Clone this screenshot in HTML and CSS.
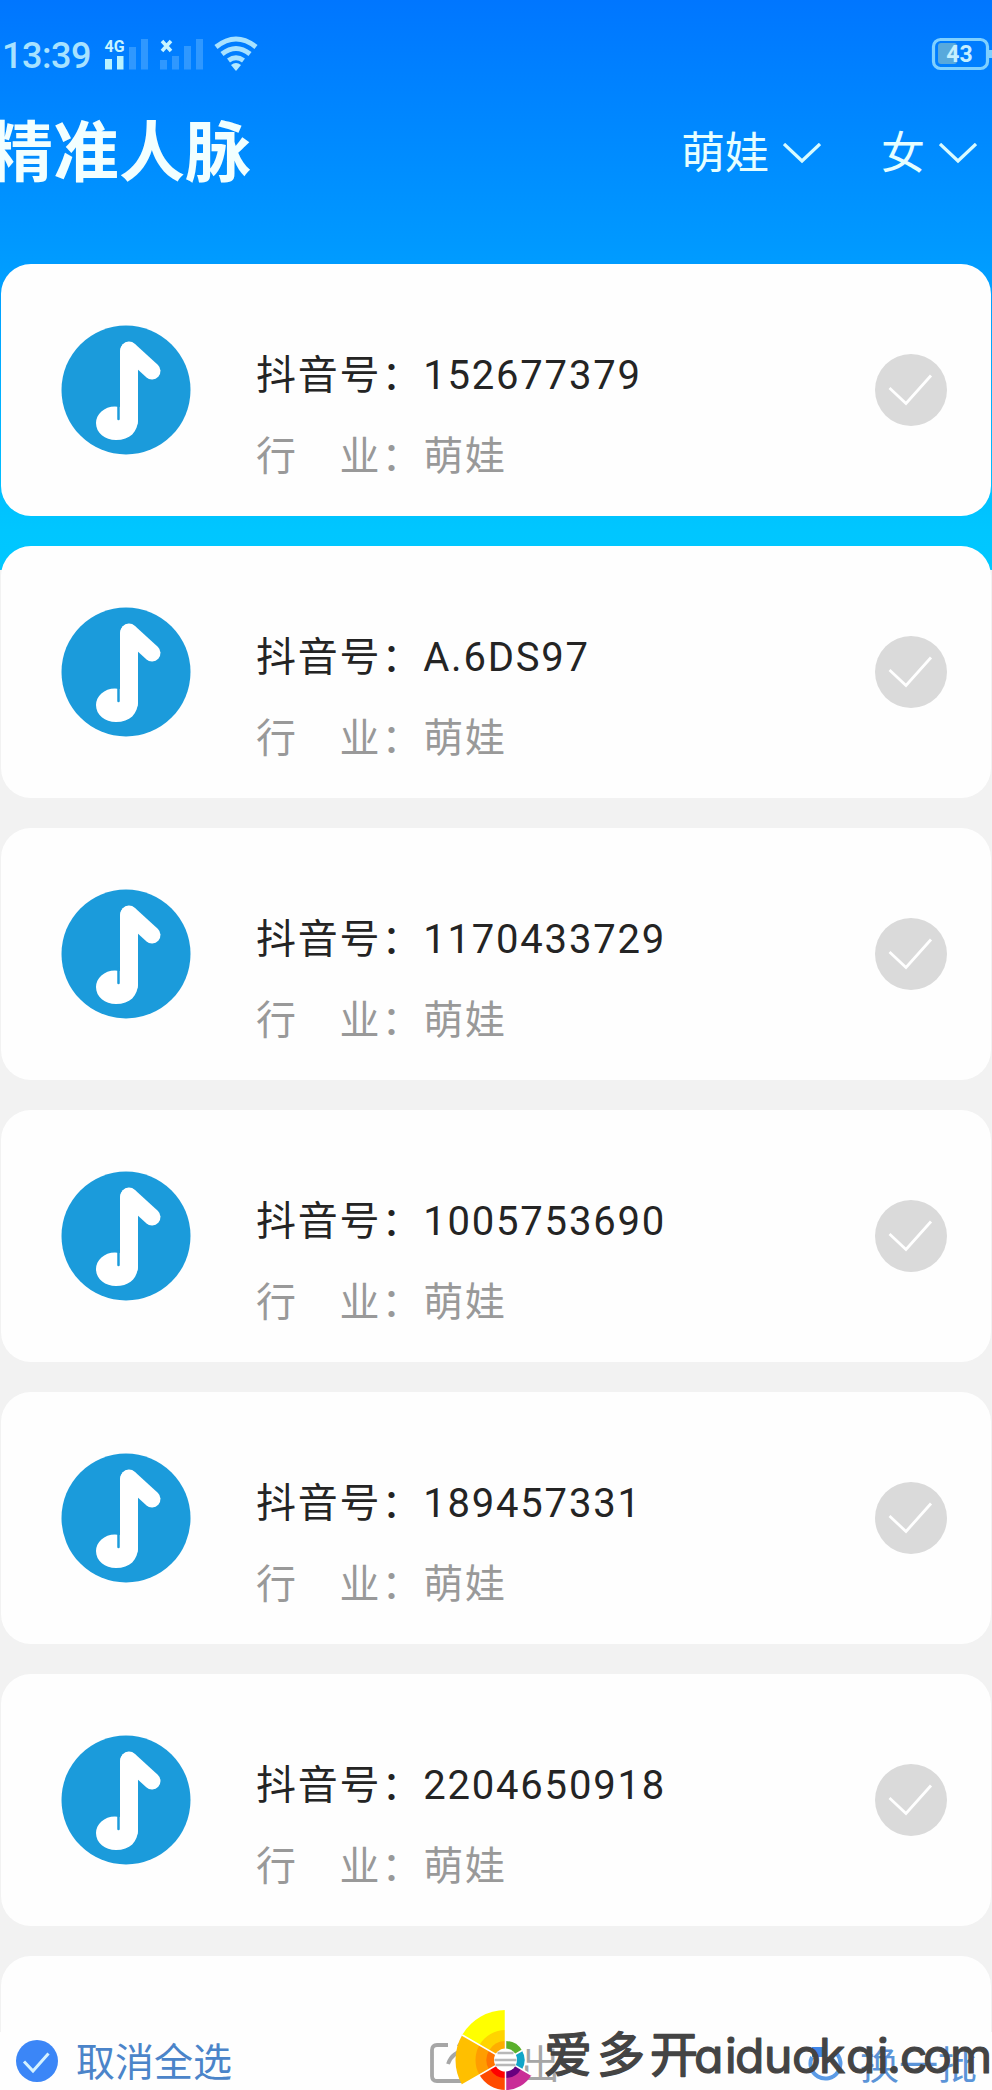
FILE: index.html
```html
<!DOCTYPE html>
<html lang="zh-CN">
<head>
<meta charset="utf-8">
<title>精准人脉</title>
<link rel="stylesheet" href="styles.css">
</head>
<body>
<svg class="defs" width="0" height="0" aria-hidden="true">
  <symbol id="note" viewBox="0 0 130 130">
    <circle cx="65" cy="65" r="64.5" fill="#1b9bdb"/>
    <path d="M68 26V96" fill="none" stroke="#fff" stroke-width="18" stroke-linecap="round"/>
    <path d="M68 25L91 46" fill="none" stroke="#fff" stroke-width="17" stroke-linecap="round"/>
    <path d="M59 96V82C46 79 35 88 35 98C35 108 44 115 55 115C69 115 77 107 77 94Z" fill="#fff"/>
    <path d="M57.500 80V94" stroke="#1b9bdb" stroke-width="2.500" stroke-linecap="round"/>
  </symbol>
  <symbol id="tick" viewBox="0 0 72 72">
    <circle cx="36" cy="36" r="36" fill="#dadada"/>
    <path d="M14.500 34L31 49.500L56 21.500" fill="none" stroke="#fff" stroke-width="2.800"/>
  </symbol>
</svg>
<div class="screen">
  <div class="status">
    <span class="clock">13:39</span>
    <svg class="signals" width="156" height="40" viewBox="104 34 156 40">
      <text class="net" x="104.500" y="52" textLength="20" lengthAdjust="spacingAndGlyphs">4G</text>
      <g fill="#b9f2ff"><rect x="105" y="59" width="7" height="10.500"/><rect x="117" y="56" width="6.500" height="13.500"/></g>
      <g fill="#2f98ff"><rect x="129" y="47" width="7" height="22.500"/><rect x="141" y="39" width="7" height="30.500"/><rect x="160" y="60" width="7" height="9.500"/><rect x="172" y="56" width="7" height="13.500"/><rect x="184" y="46" width="7" height="23.500"/><rect x="196" y="39" width="7" height="30.500"/></g>
      <path d="M162 41L171 51M171 41L162 51" stroke="#c8f5ff" stroke-width="3.500"/>
      <g fill="none" stroke="#a8e2ff" stroke-width="5"><path d="M216 47Q236 31 256 47"/><path d="M222 54Q236 43 250 54"/><path d="M228.500 60.500Q236 55 243.500 60.500"/></g>
      <path d="M231 65Q236 61 241 65L236 71Z" fill="#b4eaff"/>
    </svg>
    <svg class="battery" width="62" height="34" viewBox="930 37 62 34">
      <rect x="938" y="43" width="19" height="21" rx="3" fill="#58a9dc"/>
      <rect x="933.500" y="39.500" width="54" height="29" rx="7" fill="none" stroke="#7fd0ff" stroke-width="3.200"/>
      <path d="M989 50h3v8h-3z" fill="#7fd0ff"/>
      <text class="level" x="959.500" y="62" text-anchor="middle">43</text>
    </svg>
  </div>
  <header class="header">
    <h1 class="title">精准人脉</h1>
    <div class="filter"><span>萌娃</span><svg width="38" height="22" viewBox="0 0 38 22"><path d="M1 1L19 18L37 1" fill="none" stroke="#d8fbff" stroke-width="3.300"/></svg></div>
    <div class="filter last"><span>女</span><svg width="38" height="22" viewBox="0 0 38 22"><path d="M1 1L19 18L37 1" fill="none" stroke="#d8fbff" stroke-width="3.300"/></svg></div>
  </header>
  <main class="list">
    <article class="card"><svg class="avatar"><use href="#note"/></svg><div class="info"><p class="account">抖音号：152677379</p><p class="trade">行　业：萌娃</p></div><svg class="tick"><use href="#tick"/></svg></article>
    <article class="card"><svg class="avatar"><use href="#note"/></svg><div class="info"><p class="account">抖音号：A.6DS97</p><p class="trade">行　业：萌娃</p></div><svg class="tick"><use href="#tick"/></svg></article>
    <article class="card"><svg class="avatar"><use href="#note"/></svg><div class="info"><p class="account">抖音号：1170433729</p><p class="trade">行　业：萌娃</p></div><svg class="tick"><use href="#tick"/></svg></article>
    <article class="card"><svg class="avatar"><use href="#note"/></svg><div class="info"><p class="account">抖音号：1005753690</p><p class="trade">行　业：萌娃</p></div><svg class="tick"><use href="#tick"/></svg></article>
    <article class="card"><svg class="avatar"><use href="#note"/></svg><div class="info"><p class="account">抖音号：189457331</p><p class="trade">行　业：萌娃</p></div><svg class="tick"><use href="#tick"/></svg></article>
    <article class="card"><svg class="avatar"><use href="#note"/></svg><div class="info"><p class="account">抖音号：2204650918</p><p class="trade">行　业：萌娃</p></div><svg class="tick"><use href="#tick"/></svg></article>
    <article class="card"></article>
  </main>
  <footer class="toolbar">
    <div class="action">
      <svg width="42" height="42" viewBox="0 0 42 42"><circle cx="21" cy="21" r="21" fill="#3b86f7"/><path d="M8 21.500L17 31L32.500 13.500" fill="none" stroke="#d5f2ff" stroke-width="3"/></svg>
      <span>取消全选</span>
    </div>
    <div class="action export">
      <svg width="42" height="42" viewBox="0 0 42 42"><path d="M18 3H7Q2 3 2 8V34Q2 39 7 39H32Q37 39 37 34V24M18 22Q22 10 36 8M28 2L37 8L30 16" fill="none" stroke="#a6a6a6" stroke-width="3.800"/></svg>
      <span>导出</span>
    </div>
    <div class="action swap">
      <svg width="36" height="38" viewBox="0 0 36 38"><path d="M4 12A15 15 0 1 0 27 7" fill="none" stroke="#5b9be6" stroke-width="4"/><path d="M4 2H18V12H4Z" fill="#3f86e8"/></svg>
      <span>换一批</span>
    </div>
  </footer>
  <svg class="watermark" width="540" height="90" viewBox="452 2000 540 90">
    <g transform="translate(505.500 2060)">
      <circle r="20" fill="#fff"/>
      <path d="M0 0L-43.300-25A50 50 0 0 1 0-50Z" fill="#ffff00"/>
      <path d="M0 0L-43.300 25A50 50 0 0 1-43.300-25Z" fill="#ffbf00"/>
      <path d="M0 0V30A30 30 0 0 1-26 15Z" fill="#ff4b00"/>
      <path d="M0 0L26 15A30 30 0 0 1 0 30Z" fill="#c92d97"/>
      <path d="M0 0V-19A19 19 0 0 1 16.500-9.500Z" fill="#5ab02c"/>
      <path d="M0 0L16.500-9.500A19 19 0 0 1 16.500 9.500Z" fill="#10a5c8"/>
      <path d="M0 0L-26-15A30 30 0 0 1 0-30Z" fill="#ffd400"/>
      <path d="M0 0L-26 15A30 30 0 0 1-26-15Z" fill="#ff9d00"/>
      <path d="M0 0L-16.500-9.500A19 19 0 0 1 0-19Z" fill="#ffae00"/>
      <path d="M0 0L-16.500 9.500A19 19 0 0 1-16.500-9.500Z" fill="#ff7400"/>
      <path d="M0 0V18A18 18 0 0 1-15.600 9Z" fill="#ff0000"/>
      <path d="M0 0L15.600 9A18 18 0 0 1 0 18Z" fill="#68007f"/>
      <path d="M0-50V30M-43.300-25L26 15M-43.300 25L16.500-9.500" stroke="#fff" stroke-width="1.500"/>
      <circle r="11.500" fill="#fff"/>
      <path d="M-8-7H8M-11 0H11M-10 5H10" stroke="#b8b8b8" stroke-width="2.500"/>
    </g>
    <text class="brand-cn" x="544" y="2072" textLength="154">爱多开</text>
    <text class="brand-en" x="694 725 735 764 792 819 846 877 887 900 923 950" y="2073">aiduokai.com</text>
  </svg>
</div>
</body>
</html>
```
FILE: styles.css
```css
* {
  box-sizing: border-box;
}

body {
  margin: 0;
  background: #f2f2f2;
  font-family: Roboto, "Noto Sans CJK SC", sans-serif;
}

.defs {
  position: absolute;
}

.screen {
  position: relative;
  width: 992px;
  height: 2090px;
  overflow: hidden;
  background: linear-gradient(#0076ff, #0098ff 240px, #00c6ff 530px, #00c8ff 570px) 0 0 / 100% 570px no-repeat #f2f2f2;
}

.status {
  display: flex;
  align-items: center;
  height: 108px;
  padding-left: 2px;
}

.clock {
  width: 102px;
  color: #a8e2ff;
  font-size: 36px;
  font-weight: 500;
  letter-spacing: -0.5px;
  line-height: 40px;
  padding-top: 4px;
}

.battery {
  margin-left: auto;
}

.net {
  fill: #c8f5ff;
  font: 700 17px Roboto, sans-serif;
}

.level {
  fill: #c5efff;
  font: 700 23px Roboto, sans-serif;
}

.header {
  display: flex;
  align-items: center;
  height: 92px;
  margin-bottom: 64px;
  padding-right: 15px;
  color: #e6feff;
}

.title {
  margin: 0 auto 0 -13px;
  color: #f2ffff;
  font-size: 66px;
  font-weight: 700;
  line-height: 92px;
}

.filter {
  display: flex;
  align-items: center;
  gap: 14px;
  font-size: 44px;
  line-height: 92px;
}

.filter.last {
  margin-left: 60px;
}

.list {
  display: flex;
  flex-direction: column;
  gap: 30px;
  padding: 0 1px;
}

.card {
  display: flex;
  flex: none;
  align-items: center;
  height: 252px;
  padding: 0 44px 0 60px;
  border-radius: 30px;
  background: #fefefe;
}

.avatar {
  width: 130px;
  height: 130px;
}

.info {
  margin: 52px auto 0 65px;
}

.account,
.trade {
  margin: 0;
  font-size: 40px;
  letter-spacing: 1.8px;
  line-height: 81px;
  white-space: nowrap;
}

.account {
  color: #242424;
}

.trade {
  color: #999;
}

.tick {
  width: 72px;
  height: 72px;
}

.toolbar {
  position: absolute;
  bottom: 0;
  left: 0;
  display: flex;
  width: 992px;
  height: 58px;
  padding-left: 16px;
  background: #fefefe;
}

.action {
  display: flex;
  align-items: center;
  gap: 18px;
  color: #4b84c9;
  font-size: 39px;
  line-height: 58px;
}

.action span {
  padding-top: 4px;
}

.export {
  gap: 10px;
  margin-left: 198px;
  padding-top: 4px;
  color: #a6a6a6;
}

.swap {
  gap: 16px;
  margin-left: 248px;
  padding-top: 6px;
  color: #5b94d8;
}

.watermark {
  position: absolute;
  right: 0;
  bottom: 0;
}

.brand-cn,
.brand-en {
  fill: #444;
  stroke: #444;
  stroke-linecap: round;
  stroke-linejoin: round;
}

.brand-cn {
  font: 400 48px "Noto Sans CJK SC", sans-serif;
  stroke-width: 1.500px;
}

.brand-en {
  font: 400 48px Inter, sans-serif;
  font-feature-settings: "cv11";
  stroke-width: 1.200px;
}
```
